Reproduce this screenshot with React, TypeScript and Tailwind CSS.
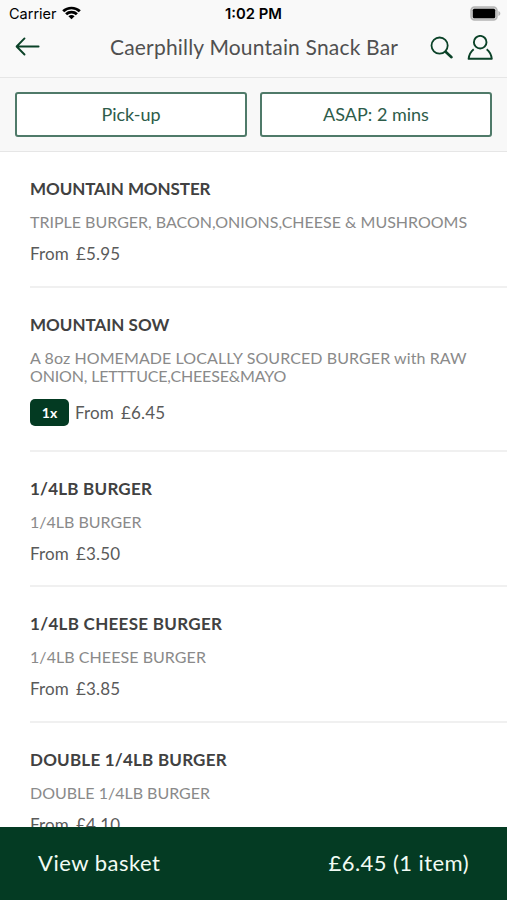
import clsx from "clsx";

interface DescriptionLine {
  text: string;
  className: string;
}

interface MenuItem {
  id: number;
  name: string;
  nameClass: string;
  rowClass: string;
  description: DescriptionLine[];
  price: string;
  quantity?: number;
}

const menuItems: MenuItem[] = [
  {
    id: 1,
    name: "MOUNTAIN MONSTER",
    nameClass: "tracking-[-0.08px]",
    rowClass: "h-[136px]",
    description: [{ text: "TRIPLE BURGER, BACON,ONIONS,CHEESE & MUSHROOMS", className: "tracking-normal" }],
    price: "£5.95",
  },
  {
    id: 2,
    name: "MOUNTAIN SOW",
    nameClass: "tracking-normal",
    rowClass: "h-[164px]",
    description: [
      { text: "A 8oz HOMEMADE LOCALLY SOURCED BURGER with RAW", className: "tracking-[0.09px]" },
      { text: "ONION, LETTTUCE,CHEESE&MAYO", className: "tracking-[-0.16px]" },
    ],
    price: "£6.45",
    quantity: 1,
  },
  {
    id: 3,
    name: "1/4LB BURGER",
    nameClass: "tracking-[0.22px]",
    rowClass: "h-[135px]",
    description: [{ text: "1/4LB BURGER", className: "tracking-normal" }],
    price: "£3.50",
  },
  {
    id: 4,
    name: "1/4LB CHEESE BURGER",
    nameClass: "tracking-[0.3px]",
    rowClass: "h-[136px]",
    description: [{ text: "1/4LB CHEESE BURGER", className: "tracking-[0.06px]" }],
    price: "£3.85",
  },
  {
    id: 5,
    name: "DOUBLE 1/4LB BURGER",
    nameClass: "tracking-[0.22px]",
    rowClass: "h-[136px]",
    description: [{ text: "DOUBLE 1/4LB BURGER", className: "tracking-normal" }],
    price: "£4.10",
  },
];

const StatusBar = () => (
  <div className="grid h-[27px] grid-cols-3 items-center pr-[6px] pl-[9px] font-['Inter',sans-serif] text-black">
    <div className="flex items-center gap-[5px] pt-px">
      <span className="text-[14.5px] leading-none">Carrier</span>
      <svg className="mb-[2px]" width="19" height="14" viewBox="0 0 19 15" preserveAspectRatio="none" fill="none" stroke="currentColor" strokeWidth="2.8">
        <path d="M1.2 5.6a11.8 11.8 0 0 1 16.6 0" />
        <path d="M4.1 8.8a7.6 7.6 0 0 1 10.8 0" />
        <path d="M9.5 14.2 6.4 11.1a4.4 4.4 0 0 1 6.2 0Z" fill="currentColor" stroke="none" />
      </svg>
    </div>
    <span className="pt-px pr-[3px] text-center text-[14.8px] leading-none font-semibold">1:02 PM</span>
    <svg className="justify-self-end" width="31" height="15" viewBox="0 0 31 15">
      <rect x="1" y="1" width="26" height="13" rx="3.5" fill="#d0d0d0" stroke="#b5b5b5" strokeWidth="1.5" />
      <rect x="2.8" y="2.8" width="22.4" height="9.4" rx="1.5" fill="#000" />
      <path d="M28.4 5v5c1.2-.4 1.9-1.4 1.9-2.5S29.6 5.4 28.4 5Z" fill="#b5b5b5" />
    </svg>
  </div>
);

const NavBar = () => (
  <div className="flex h-[50px] items-start pr-[14px] pl-[15px] text-[#0b4228]">
    <button className="mt-[10px]" aria-label="Back">
      <svg width="25" height="19" viewBox="0 0 25 19" fill="none" stroke="currentColor" strokeWidth="1.9" strokeLinecap="round" strokeLinejoin="round">
        <path d="M23.6 9.5H1.8M9.5 1.4 1.6 9.5l7.9 8" />
      </svg>
    </button>
    <h1 className="mt-[5px] ml-[70px] flex-1 text-[21px] leading-[30px] tracking-[0.19px] whitespace-nowrap text-[#505050]">
      Caerphilly Mountain Snack Bar
    </h1>
    <div className="flex gap-[13px] pt-[8px]">
      <button aria-label="Search">
        <svg width="24" height="24" viewBox="0 0 24 24" fill="none" stroke="currentColor" strokeLinecap="round">
          <circle cx="9.6" cy="9.6" r="8.1" strokeWidth="1.8" />
          <path d="m15.6 15.7 5.9 5.5" strokeWidth="2.6" />
        </svg>
      </button>
      <button aria-label="Account">
        <svg width="26" height="26" viewBox="0 0 26 26" fill="none" stroke="currentColor" strokeWidth="1.9" strokeLinejoin="round">
          <circle cx="13.2" cy="7.2" r="6.3" />
          <path d="M6.7 14.3C3.9 16.500 2.200 19.600 1.600 23.800h23.200c-.6-4.200-2.300-7.300-5.100-9.500" />
        </svg>
      </button>
    </div>
  </div>
);

const OrderOptions = () => (
  <div className="flex h-[75px] gap-[13px] border-y border-[#e6e6e6] bg-[#f8f8f8] px-[15px] pt-[14px]">
    <button className="h-[45px] flex-1 rounded-[3px] border-2 border-[#4f7a69] bg-white text-[18px] text-[#2d5c4a]">
      Pick-up
    </button>
    <button className="h-[45px] flex-1 rounded-[3px] border-2 border-[#4f7a69] bg-white text-[18px] text-[#2d5c4a]">
      ASAP: 2 mins
    </button>
  </div>
);

const MenuRow = ({ item }: { item: MenuItem }) => (
  <li className={clsx("shrink-0 border-b-2 border-[#f0f0f0] pt-[25px]", item.rowClass)}>
    <h2 className={clsx("text-[17px] leading-6 font-bold text-[#414141]", item.nameClass)}>{item.name}</h2>
    <p className="mt-[12px] text-[16px] leading-[18px] whitespace-nowrap text-[#8a8a8a]">
      {item.description.map((line) => (
        <span key={line.text} className={clsx("block", line.className)}>{line.text}</span>
      ))}
    </p>
    <div className={clsx("flex items-center gap-[6px]", item.quantity ? "mt-[14px]" : "mt-[11px]")}>
      {item.quantity && (
        <span className="flex h-[27px] w-[39px] items-center justify-center rounded-[5px] bg-[#033a22] text-[14px] font-bold text-white">
          {item.quantity}x
        </span>
      )}
      <span className="flex gap-[7px] text-[17px] leading-6 tracking-[0.15px] text-[#5a5a5a]">
        <span>From</span>
        <span>{item.price}</span>
      </span>
    </div>
  </li>
);

export default function App() {
  return (
    <div className="flex h-[900px] w-[507px] flex-col overflow-hidden bg-white font-['Lato',sans-serif]">
      <header className="shrink-0 bg-[#f9f9f9]">
        <StatusBar />
        <NavBar />
        <OrderOptions />
      </header>

      <ul className="flex min-h-0 flex-1 flex-col overflow-hidden pl-[30px]">
        {menuItems.map((item) => (
          <MenuRow key={item.id} item={item} />
        ))}
      </ul>

      {/* Basket bar */}
      <button className="flex h-[73px] shrink-0 items-center justify-between bg-[#043b23] px-[38px] pb-[2px] text-[22px] text-[#f2fbf4]">
        <span className="tracking-[0.5px]">View basket</span>
        <span className="tracking-[0.43px]">£6.45 (1 item)</span>
      </button>
    </div>
  );
}
